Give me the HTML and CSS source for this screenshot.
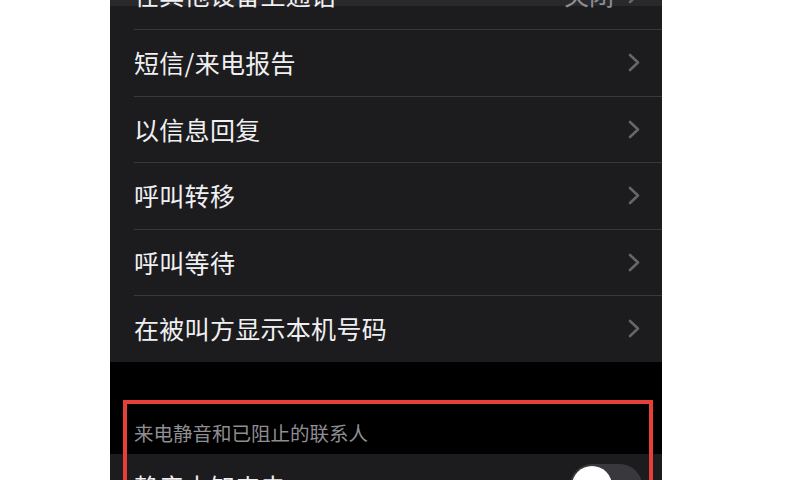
FILE: index.html
```html
<!DOCTYPE html>
<html lang="zh-CN">
<head>
<meta charset="utf-8">
<title>电话设置</title>
<link rel="stylesheet" href="styles.css">
</head>
<body>
<div class="phone">
  <div class="group">
    <div class="row row-cut">
      <span class="label">在其他设备上通话</span>
      <span class="value">关闭</span>
      <svg class="chev" viewBox="0 0 12 19"><polyline points="2,2 10,9.5 2,17"/></svg>
    </div>
    <div class="row">
      <span class="label">短信/来电报告</span>
      <svg class="chev" viewBox="0 0 12 19"><polyline points="2,2 10,9.5 2,17"/></svg>
    </div>
    <div class="row">
      <span class="label">以信息回复</span>
      <svg class="chev" viewBox="0 0 12 19"><polyline points="2,2 10,9.5 2,17"/></svg>
    </div>
    <div class="row">
      <span class="label">呼叫转移</span>
      <svg class="chev" viewBox="0 0 12 19"><polyline points="2,2 10,9.5 2,17"/></svg>
    </div>
    <div class="row">
      <span class="label">呼叫等待</span>
      <svg class="chev" viewBox="0 0 12 19"><polyline points="2,2 10,9.5 2,17"/></svg>
    </div>
    <div class="row">
      <span class="label">在被叫方显示本机号码</span>
      <svg class="chev" viewBox="0 0 12 19"><polyline points="2,2 10,9.5 2,17"/></svg>
    </div>
  </div>
  <div class="section-header">来电静音和已阻止的联系人</div>
  <div class="group">
    <div class="row row-first">
      <span class="label">静音未知来电</span>
      <span class="toggle"><span class="knob"></span></span>
    </div>
  </div>
  <div class="highlight"></div>
</div>
</body>
</html>
```

FILE: styles.css
```css
html, body {
  margin: 0;
  padding: 0;
  background: #ffffff;
}
body {
  width: 800px;
  height: 480px;
  overflow: hidden;
  font-family: "Noto Sans CJK SC", "Noto Sans", sans-serif;
}
.phone {
  position: relative;
  margin-left: 110px;
  width: 552px;
  height: 480px;
  background: #000000;
  overflow: hidden;
}
.group {
  background: #1c1c1e;
  padding-left: 24px;
}
.row {
  display: flex;
  align-items: center;
  height: 65.5px;
  border-top: 1px solid #38383a;
  padding-right: 22px;
  color: #f0f0f2;
  font-size: 25px;
  line-height: 1;
}
.group .row-cut {
  margin-top: -41px;
  border-top: none;
  height: 70px;
  background: linear-gradient(to bottom, transparent 0 41px, #29292b 41px 47px, transparent 47px);
  margin-left: -24px;
  padding-left: 24px;
}
.row-first {
  border-top: none;
}
.label {
  flex: 1;
  letter-spacing: 0.3px;
}
.value {
  color: #8e8e93;
  margin-right: 14px;
}
.chev {
  width: 12px;
  height: 19px;
  fill: none;
  stroke: #66666a;
  stroke-width: 2.6;
  stroke-linecap: round;
  stroke-linejoin: round;
}
.section-header {
  padding: 60px 0 10px 24px;
  color: #8e8e93;
  font-size: 19.5px;
  line-height: 22px;
}
.toggle {
  display: flex;
  align-items: center;
  width: 72px;
  height: 44px;
  border-radius: 22px;
  background: #39393d;
  padding: 0 2px;
  box-sizing: border-box;
  margin-right: -2px;
}
.knob {
  width: 40px;
  height: 40px;
  border-radius: 50%;
  background: #ffffff;
}
.highlight {
  position: absolute;
  left: 13px;
  top: 400px;
  width: 530px;
  height: 120px;
  border: 4px solid #e5413a;
  box-sizing: border-box;
}
```
